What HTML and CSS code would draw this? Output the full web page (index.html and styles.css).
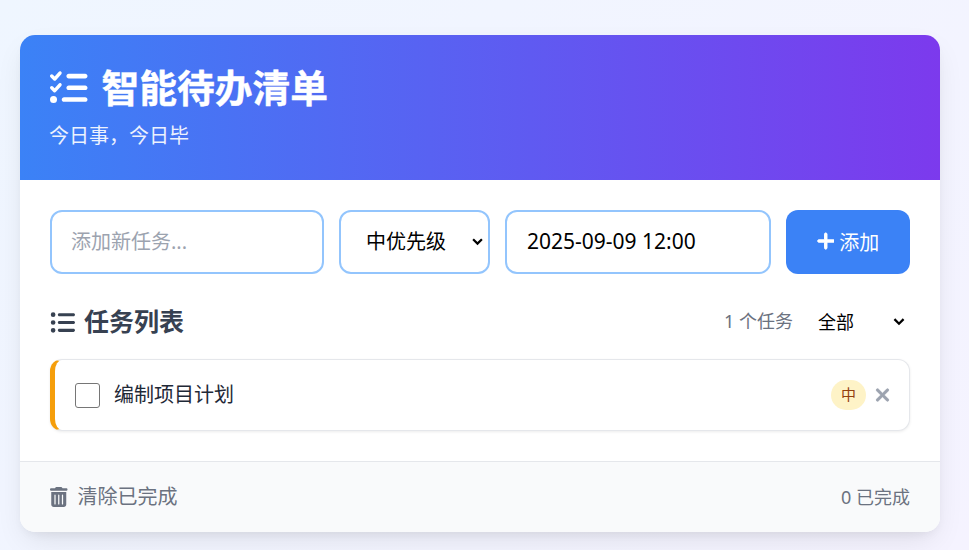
FILE: index.html
```html
<!DOCTYPE html>
<html lang="zh-CN">
<head>
  <meta charset="UTF-8">
  <title>智能待办清单</title>
  <link rel="stylesheet" href="styles.css">
</head>
<body>

<div class="app">
  <div class="header">
    <h1>
      <svg class="title-icon" viewBox="0 0 512 512"><path d="M152.1 38.2c9.9 8.9 10.7 24 1.8 33.9l-72 80c-4.4 4.9-10.6 7.8-17.2 7.9s-12.9-2.4-17.6-7L7 113C-2.3 103.6-2.3 88.4 7 79s24.6-9.4 33.9 0l22.1 22.1 55.1-61.2c8.9-9.9 24-10.7 33.9-1.8zm0 160c9.9 8.9 10.7 24 1.8 33.9l-72 80c-4.4 4.9-10.6 7.8-17.2 7.9s-12.9-2.4-17.6-7L7 273c-9.4-9.4-9.4-24.6 0-33.9s24.6-9.4 33.9 0l22.1 22.1 55.1-61.2c8.9-9.9 24-10.7 33.9-1.8zM224 96c0-17.7 14.3-32 32-32H480c17.7 0 32 14.3 32 32s-14.3 32-32 32H256c-17.7 0-32-14.3-32-32zm0 160c0-17.7 14.3-32 32-32H480c17.7 0 32 14.3 32 32s-14.3 32-32 32H256c-17.7 0-32-14.3-32-32zM160 416c0-17.7 14.3-32 32-32H480c17.7 0 32 14.3 32 32s-14.3 32-32 32H192c-17.7 0-32-14.3-32-32zM48 368a48 48 0 1 1 0 96 48 48 0 1 1 0-96z"/></svg>
      <span>智能待办清单</span>
    </h1>
    <p>今日事，今日毕</p>
  </div>

  <div class="main">
    <div class="add-form">
      <input class="field" type="text" placeholder="添加新任务...">
      <select class="field field-select">
        <option>中优先级</option>
      </select>
      <input class="field field-date" type="text" value="2025-09-09 12:00">
      <button class="add-btn">
        <svg class="plus-icon" viewBox="0 0 448 512"><path d="M256 80c0-17.7-14.3-32-32-32s-32 14.3-32 32V224H48c-17.7 0-32 14.3-32 32s14.3 32 32 32H192V432c0 17.7 14.3 32 32 32s32-14.3 32-32V288H432c17.7 0 32-14.3 32-32s-14.3-32-32-32H256V80z"/></svg>
        <span>添加</span>
      </button>
    </div>

    <div class="list-head">
      <h2>
        <svg class="list-icon" viewBox="0 0 512 512"><path d="M64 144a48 48 0 1 0 0-96 48 48 0 1 0 0 96zM192 64c-17.7 0-32 14.3-32 32s14.3 32 32 32H480c17.7 0 32-14.3 32-32s-14.3-32-32-32H192zm0 160c-17.7 0-32 14.3-32 32s14.3 32 32 32H480c17.7 0 32-14.3 32-32s-14.3-32-32-32H192zm0 160c-17.7 0-32 14.3-32 32s14.3 32 32 32H480c17.7 0 32-14.3 32-32s-14.3-32-32-32H192zM64 464a48 48 0 1 0 0-96 48 48 0 1 0 0 96zm48-208a48 48 0 1 0 -96 0 48 48 0 1 0 96 0z"/></svg>
        <span>任务列表</span>
      </h2>
      <div class="list-tools">
        <span class="count">1 个任务</span>
        <select class="filter">
          <option>全部</option>
        </select>
      </div>
    </div>

    <div class="task">
      <input class="task-check" type="checkbox">
      <span class="task-name">编制项目计划</span>
      <span class="badge">中</span>
      <svg class="del-icon" viewBox="0 0 384 512"><path d="M342.6 150.6c12.5-12.5 12.5-32.8 0-45.3s-32.8-12.5-45.3 0L192 210.7 86.6 105.4c-12.5-12.5-32.8-12.5-45.3 0s-12.5 32.8 0 45.3L146.7 256 41.4 361.4c-12.5 12.5-12.5 32.8 0 45.3s32.8 12.5 45.3 0L192 301.3 297.4 406.6c12.5 12.5 32.8 12.5 45.3 0s12.5-32.8 0-45.3L237.3 256 342.6 150.6z"/></svg>
    </div>
  </div>

  <div class="footer">
    <span class="clear">
      <svg class="trash-icon" viewBox="0 0 448 512"><path d="M135.2 17.7C140.6 6.8 151.7 0 163.8 0H284.2c12.1 0 23.2 6.8 28.6 17.7L320 32h96c17.7 0 32 14.3 32 32s-14.3 32-32 32H32C14.3 96 0 81.7 0 64S14.3 32 32 32h96l7.2-14.3zM32 128H416V448c0 35.3-28.7 64-64 64H96c-35.3 0-64-28.7-64-64V128zm96 64c-8.8 0-16 7.2-16 16V432c0 8.8 7.2 16 16 16s16-7.2 16-16V208c0-8.8-7.2-16-16-16zm96 0c-8.8 0-16 7.2-16 16V432c0 8.8 7.2 16 16 16s16-7.2 16-16V208c0-8.8-7.2-16-16-16zm96 0c-8.8 0-16 7.2-16 16V432c0 8.8 7.2 16 16 16s16-7.2 16-16V208c0-8.8-7.2-16-16-16z"/></svg>
      <span>清除已完成</span>
    </span>
    <span class="done">0 已完成</span>
  </div>
</div>

</body>
</html>
```

FILE: styles.css
```css
* {
  box-sizing: border-box;
}
html, body {
  height: 100%;
}
body {
  margin: 0;
  padding: 35px 0 0 20px;
  overflow: hidden;
  font-family: "Noto Sans", "Noto Sans CJK SC", sans-serif;
  font-size: 20px;
  background: linear-gradient(135deg, #eff6ff, #f5f3ff);
}
.app {
  width: 920px;
  background: #fff;
  border-radius: 15px;
  overflow: hidden;
  box-shadow: 0 12px 30px -6px rgba(0,0,0,0.1), 0 5px 12px -5px rgba(0,0,0,0.08);
}
.header {
  height: 145px;
  padding: 30px 30px 0;
  color: #fff;
  background: linear-gradient(90deg, #3b82f6, #7c3aed);
}
h1 {
  display: flex;
  align-items: center;
  gap: 14px;
  margin: 0;
  height: 46px;
  font-size: 37.75px;
  font-weight: 700;
}
h1 span {
  margin-bottom: 5px;
  -webkit-text-stroke: 0.4px #fff;
}
.title-icon {
  width: 37.5px;
  height: 37.5px;
  margin-bottom: 1px;
  fill: #fff;
}
.header p {
  margin: 10px 0 0 -1px;
  line-height: 30px;
  opacity: 0.9;
}
.main {
  padding: 30px;
}
.add-form {
  display: grid;
  grid-template-columns: 274px 151px 266px 124px;
  gap: 15px;
}
.field {
  height: 64px;
  padding: 0 19px 2px;
  font: inherit;
  color: #000;
  background: #fff;
  border: 2.5px solid #93c5fd;
  border-radius: 12px;
  outline: none;
}
.field::placeholder {
  color: #9ca3af;
}
.field-select {
  padding: 0 0 2px 25px;
  appearance: none;
  background: #fff url("data:image/svg+xml,%3Csvg xmlns='http://www.w3.org/2000/svg' viewBox='0 0 10 7'%3E%3Cpath d='M1 1l4 4 4-4' fill='none' stroke='%23000' stroke-width='2'/%3E%3C/svg%3E") no-repeat right 5.5px center / 11px 8px;
}
.field-date {
  padding-left: 20px;
  font-size: 21px;
}
.add-btn {
  display: flex;
  align-items: center;
  justify-content: center;
  gap: 5px;
  padding: 0 0 2px;
  font: inherit;
  color: #fff;
  background: #3b82f6;
  border: none;
  border-radius: 12px;
}
.plus-icon {
  width: 17.5px;
  height: 20px;
  fill: #fff;
  stroke: #fff;
  stroke-width: 24;
}
.list-head {
  display: flex;
  align-items: center;
  justify-content: space-between;
  height: 36px;
  margin-top: 30px;
  margin-bottom: 19px;
}
h2 {
  display: flex;
  align-items: center;
  gap: 9px;
  margin: 0;
  font-size: 25px;
  font-weight: 700;
  color: #374151;
}
h2 span {
  margin-bottom: 4px;
}
.list-icon {
  width: 25px;
  height: 25px;
  fill: #374151;
}
.list-tools {
  display: flex;
  align-items: center;
  gap: 20px;
}
.count {
  margin-bottom: 4px;
  font-size: 18px;
  color: #6b7280;
}
.filter {
  width: 97px;
  height: 28px;
  padding: 0 0 0 5px;
  font: inherit;
  font-size: 18px;
  color: #000;
  border: none;
  outline: none;
  appearance: none;
  background: url("data:image/svg+xml,%3Csvg xmlns='http://www.w3.org/2000/svg' viewBox='0 0 10 7'%3E%3Cpath d='M1 1l4 4 4-4' fill='none' stroke='%23000' stroke-width='2'/%3E%3C/svg%3E") no-repeat right 5px center / 12px 8px;
}
.task {
  display: flex;
  align-items: center;
  height: 72px;
  padding: 0 19px;
  background: #fff;
  border: 1px solid #e5e7eb;
  border-left: 5px solid #f59e0b;
  border-radius: 12px;
  box-shadow: 0 1px 3px rgba(0,0,0,0.08);
}
.task-check {
  width: 25px;
  height: 25px;
  margin: 0 14px 0 1px;
  appearance: none;
  background: #fff;
  border: 1.5px solid #767676;
  border-radius: 3px;
}
.task-name {
  flex: 1;
  margin-bottom: 3px;
  font-size: 20px;
  color: #1f2937;
}
.badge {
  display: flex;
  align-items: center;
  justify-content: center;
  width: 35px;
  height: 30px;
  padding-bottom: 3px;
  border-radius: 15px;
  font-size: 15px;
  color: #92400e;
  background: #fef3c7;
}
.del-icon {
  width: 15px;
  height: 20px;
  margin-left: 9px;
  fill: #9ca3af;
  stroke: #9ca3af;
  stroke-width: 20;
}
.footer {
  display: flex;
  align-items: center;
  justify-content: space-between;
  height: 71px;
  padding: 0 30px;
  font-size: 20px;
  color: #6b7280;
  background: #f9fafb;
  border-top: 1px solid #e5e7eb;
}
.clear {
  display: flex;
  align-items: center;
  gap: 10px;
}
.clear span {
  margin-bottom: 3px;
}
.done {
  margin-bottom: 3px;
  font-size: 18px;
}
.trash-icon {
  width: 17.5px;
  height: 20px;
  fill: #6b7280;
}
```
